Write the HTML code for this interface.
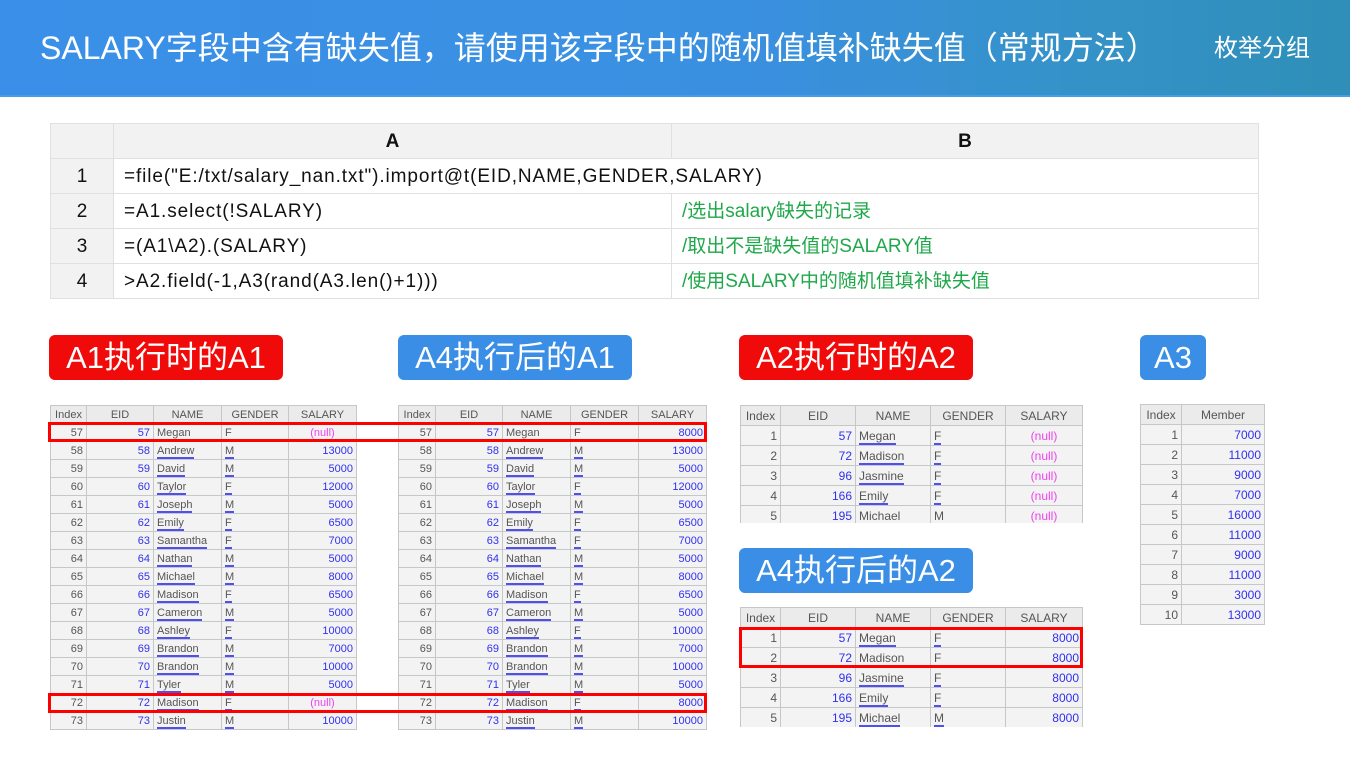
<!DOCTYPE html>
<html><head><meta charset="utf-8"><style>
*{margin:0;padding:0;box-sizing:border-box}
body{width:1350px;height:759px;background:#fff;position:relative;overflow:hidden;font-family:"Liberation Sans","Noto Sans CJK SC",sans-serif}
.hdr{position:absolute;left:0;top:0;width:1350px;height:97px;background:linear-gradient(90deg,#3a8fe8 0%,#3a90e0 55%,#3592c8 80%,#2f8fb8 100%);border-bottom:2px solid #4a9be8}
.hdr .t{position:absolute;left:40px;top:26px;color:#fff;font-size:32px;line-height:44px;white-space:nowrap}
.hdr .r{position:absolute;left:1214px;top:32px;color:#fff;font-size:24px;line-height:34px}
table{border-collapse:collapse;table-layout:fixed;position:absolute}
.code td{border:1px solid #e0e0e0;height:35px;font-size:19px;line-height:33px;color:#111;padding:0 0 0 10px;vertical-align:middle;white-space:nowrap;overflow:hidden}
.code td.a{letter-spacing:0.9px}
.code .h td{background:#f2f2f2;font-weight:bold;text-align:center;padding:0}
.code td.n{background:#f2f2f2;text-align:center;padding:0}
.code td.g{color:#1fa84a}
.lbl{position:absolute;height:45px;border-radius:6px;color:#fff;font-size:31px;line-height:45px;text-align:center;white-space:nowrap}
.red{background:#f00a0a}.blue{background:#3a8ee6}
.d td{border:1px solid #c4c8c8;background:#f3f3f3;font-size:11px;color:#555;height:18px;padding:0 3px;white-space:nowrap;overflow:hidden}
.d tr.h td{background:#ebebeb;text-align:center;color:#555}
.d td.i{text-align:right}
.d td.e{text-align:right;color:#3030f0}
.d td.s{text-align:right;color:#3030f0}
.d td.nl{text-align:center;color:#f040f0}
.d u{text-decoration:none;border-bottom:2px solid #5050f0}
.d2 td{height:20px;font-size:12px}
.box{position:absolute;border:3px solid #f00}
</style></head><body>
<div class="hdr"><div class="t">SALARY字段中含有缺失值，请使用该字段中的随机值填补缺失值（常规方法）</div><div class="r">枚举分组</div></div>

<table class="code" style="left:50px;top:123px;width:1208px">
<colgroup><col style="width:63px"><col style="width:558px"><col style="width:587px"></colgroup>
<tr class="h"><td></td><td>A</td><td>B</td></tr>
<tr><td class="n">1</td><td class="a" colspan="2">=file("E:/txt/salary_nan.txt").import@t(EID,NAME,GENDER,SALARY)</td></tr>
<tr><td class="n">2</td><td class="a">=A1.select(!SALARY)</td><td class="g">/选出salary缺失的记录</td></tr>
<tr><td class="n">3</td><td class="a">=(A1\A2).(SALARY)</td><td class="g">/取出不是缺失值的SALARY值</td></tr>
<tr><td class="n">4</td><td class="a">&gt;A2.field(-1,A3(rand(A3.len()+1)))</td><td class="g">/使用SALARY中的随机值填补缺失值</td></tr>
</table>

<div class="lbl red" style="left:49px;top:335px;width:234px">A1执行时的A1</div>
<div class="lbl blue" style="left:398px;top:335px;width:234px">A4执行后的A1</div>
<div class="lbl red" style="left:739px;top:335px;width:234px">A2执行时的A2</div>
<div class="lbl blue" style="left:1140px;top:335px;width:66px">A3</div>
<div class="lbl blue" style="left:739px;top:548px;width:234px">A4执行后的A2</div>

<table class="d" style="left:50px;top:405px;width:306px">
<colgroup><col style="width:36px"><col style="width:67px"><col style="width:68px"><col style="width:67px"><col style="width:68px"></colgroup>
<tr class="h"><td>Index</td><td>EID</td><td>NAME</td><td>GENDER</td><td>SALARY</td></tr>
<tr><td class="i">57</td><td class="e">57</td><td>Megan</td><td>F</td><td class="nl">(null)</td></tr>
<tr><td class="i">58</td><td class="e">58</td><td><u>Andrew</u></td><td><u>M</u></td><td class="s">13000</td></tr>
<tr><td class="i">59</td><td class="e">59</td><td><u>David</u></td><td><u>M</u></td><td class="s">5000</td></tr>
<tr><td class="i">60</td><td class="e">60</td><td><u>Taylor</u></td><td><u>F</u></td><td class="s">12000</td></tr>
<tr><td class="i">61</td><td class="e">61</td><td><u>Joseph</u></td><td><u>M</u></td><td class="s">5000</td></tr>
<tr><td class="i">62</td><td class="e">62</td><td><u>Emily</u></td><td><u>F</u></td><td class="s">6500</td></tr>
<tr><td class="i">63</td><td class="e">63</td><td><u>Samantha</u></td><td><u>F</u></td><td class="s">7000</td></tr>
<tr><td class="i">64</td><td class="e">64</td><td><u>Nathan</u></td><td><u>M</u></td><td class="s">5000</td></tr>
<tr><td class="i">65</td><td class="e">65</td><td><u>Michael</u></td><td><u>M</u></td><td class="s">8000</td></tr>
<tr><td class="i">66</td><td class="e">66</td><td><u>Madison</u></td><td><u>F</u></td><td class="s">6500</td></tr>
<tr><td class="i">67</td><td class="e">67</td><td><u>Cameron</u></td><td><u>M</u></td><td class="s">5000</td></tr>
<tr><td class="i">68</td><td class="e">68</td><td><u>Ashley</u></td><td><u>F</u></td><td class="s">10000</td></tr>
<tr><td class="i">69</td><td class="e">69</td><td><u>Brandon</u></td><td><u>M</u></td><td class="s">7000</td></tr>
<tr><td class="i">70</td><td class="e">70</td><td><u>Brandon</u></td><td><u>M</u></td><td class="s">10000</td></tr>
<tr><td class="i">71</td><td class="e">71</td><td><u>Tyler</u></td><td><u>M</u></td><td class="s">5000</td></tr>
<tr><td class="i">72</td><td class="e">72</td><td><u>Madison</u></td><td><u>F</u></td><td class="nl">(null)</td></tr>
<tr><td class="i">73</td><td class="e">73</td><td><u>Justin</u></td><td><u>M</u></td><td class="s">10000</td></tr>
</table>

<table class="d" style="left:398px;top:405px;width:308px">
<colgroup><col style="width:37px"><col style="width:67px"><col style="width:68px"><col style="width:68px"><col style="width:68px"></colgroup>
<tr class="h"><td>Index</td><td>EID</td><td>NAME</td><td>GENDER</td><td>SALARY</td></tr>
<tr><td class="i">57</td><td class="e">57</td><td>Megan</td><td>F</td><td class="s">8000</td></tr>
<tr><td class="i">58</td><td class="e">58</td><td><u>Andrew</u></td><td><u>M</u></td><td class="s">13000</td></tr>
<tr><td class="i">59</td><td class="e">59</td><td><u>David</u></td><td><u>M</u></td><td class="s">5000</td></tr>
<tr><td class="i">60</td><td class="e">60</td><td><u>Taylor</u></td><td><u>F</u></td><td class="s">12000</td></tr>
<tr><td class="i">61</td><td class="e">61</td><td><u>Joseph</u></td><td><u>M</u></td><td class="s">5000</td></tr>
<tr><td class="i">62</td><td class="e">62</td><td><u>Emily</u></td><td><u>F</u></td><td class="s">6500</td></tr>
<tr><td class="i">63</td><td class="e">63</td><td><u>Samantha</u></td><td><u>F</u></td><td class="s">7000</td></tr>
<tr><td class="i">64</td><td class="e">64</td><td><u>Nathan</u></td><td><u>M</u></td><td class="s">5000</td></tr>
<tr><td class="i">65</td><td class="e">65</td><td><u>Michael</u></td><td><u>M</u></td><td class="s">8000</td></tr>
<tr><td class="i">66</td><td class="e">66</td><td><u>Madison</u></td><td><u>F</u></td><td class="s">6500</td></tr>
<tr><td class="i">67</td><td class="e">67</td><td><u>Cameron</u></td><td><u>M</u></td><td class="s">5000</td></tr>
<tr><td class="i">68</td><td class="e">68</td><td><u>Ashley</u></td><td><u>F</u></td><td class="s">10000</td></tr>
<tr><td class="i">69</td><td class="e">69</td><td><u>Brandon</u></td><td><u>M</u></td><td class="s">7000</td></tr>
<tr><td class="i">70</td><td class="e">70</td><td><u>Brandon</u></td><td><u>M</u></td><td class="s">10000</td></tr>
<tr><td class="i">71</td><td class="e">71</td><td><u>Tyler</u></td><td><u>M</u></td><td class="s">5000</td></tr>
<tr><td class="i">72</td><td class="e">72</td><td><u>Madison</u></td><td><u>F</u></td><td class="s">8000</td></tr>
<tr><td class="i">73</td><td class="e">73</td><td><u>Justin</u></td><td><u>M</u></td><td class="s">10000</td></tr>
</table>

<div style="position:absolute;left:740px;top:405px;width:343px;height:118px;overflow:hidden">
<table class="d d2" style="left:0;top:0;width:342px">
<colgroup><col style="width:40px"><col style="width:75px"><col style="width:75px"><col style="width:75px"><col style="width:77px"></colgroup>
<tr class="h"><td>Index</td><td>EID</td><td>NAME</td><td>GENDER</td><td>SALARY</td></tr>
<tr><td class="i">1</td><td class="e">57</td><td><u>Megan</u></td><td><u>F</u></td><td class="nl">(null)</td></tr>
<tr><td class="i">2</td><td class="e">72</td><td><u>Madison</u></td><td><u>F</u></td><td class="nl">(null)</td></tr>
<tr><td class="i">3</td><td class="e">96</td><td><u>Jasmine</u></td><td><u>F</u></td><td class="nl">(null)</td></tr>
<tr><td class="i">4</td><td class="e">166</td><td><u>Emily</u></td><td><u>F</u></td><td class="nl">(null)</td></tr>
<tr><td class="i">5</td><td class="e">195</td><td><u>Michael</u></td><td><u>M</u></td><td class="nl">(null)</td></tr>
</table></div>

<div style="position:absolute;left:740px;top:607px;width:343px;height:120px;overflow:hidden">
<table class="d d2" style="left:0;top:0;width:342px">
<colgroup><col style="width:40px"><col style="width:75px"><col style="width:75px"><col style="width:75px"><col style="width:77px"></colgroup>
<tr class="h"><td>Index</td><td>EID</td><td>NAME</td><td>GENDER</td><td>SALARY</td></tr>
<tr><td class="i">1</td><td class="e">57</td><td><u>Megan</u></td><td><u>F</u></td><td class="s">8000</td></tr>
<tr><td class="i">2</td><td class="e">72</td><td><u>Madison</u></td><td><u>F</u></td><td class="s">8000</td></tr>
<tr><td class="i">3</td><td class="e">96</td><td><u>Jasmine</u></td><td><u>F</u></td><td class="s">8000</td></tr>
<tr><td class="i">4</td><td class="e">166</td><td><u>Emily</u></td><td><u>F</u></td><td class="s">8000</td></tr>
<tr><td class="i">5</td><td class="e">195</td><td><u>Michael</u></td><td><u>M</u></td><td class="s">8000</td></tr>
</table></div>

<table class="d d2" style="left:1140px;top:404px;width:124px">
<colgroup><col style="width:41px"><col style="width:83px"></colgroup>
<tr class="h"><td>Index</td><td>Member</td></tr>
<tr><td class="i">1</td><td class="s">7000</td></tr>
<tr><td class="i">2</td><td class="s">11000</td></tr>
<tr><td class="i">3</td><td class="s">9000</td></tr>
<tr><td class="i">4</td><td class="s">7000</td></tr>
<tr><td class="i">5</td><td class="s">16000</td></tr>
<tr><td class="i">6</td><td class="s">11000</td></tr>
<tr><td class="i">7</td><td class="s">9000</td></tr>
<tr><td class="i">8</td><td class="s">11000</td></tr>
<tr><td class="i">9</td><td class="s">3000</td></tr>
<tr><td class="i">10</td><td class="s">13000</td></tr>
</table>

<div class="box" style="left:48px;top:422px;width:659px;height:20px"></div>
<div class="box" style="left:48px;top:693px;width:659px;height:20px"></div>
<div class="box" style="left:739px;top:627px;width:344px;height:41px"></div>
</body></html>
